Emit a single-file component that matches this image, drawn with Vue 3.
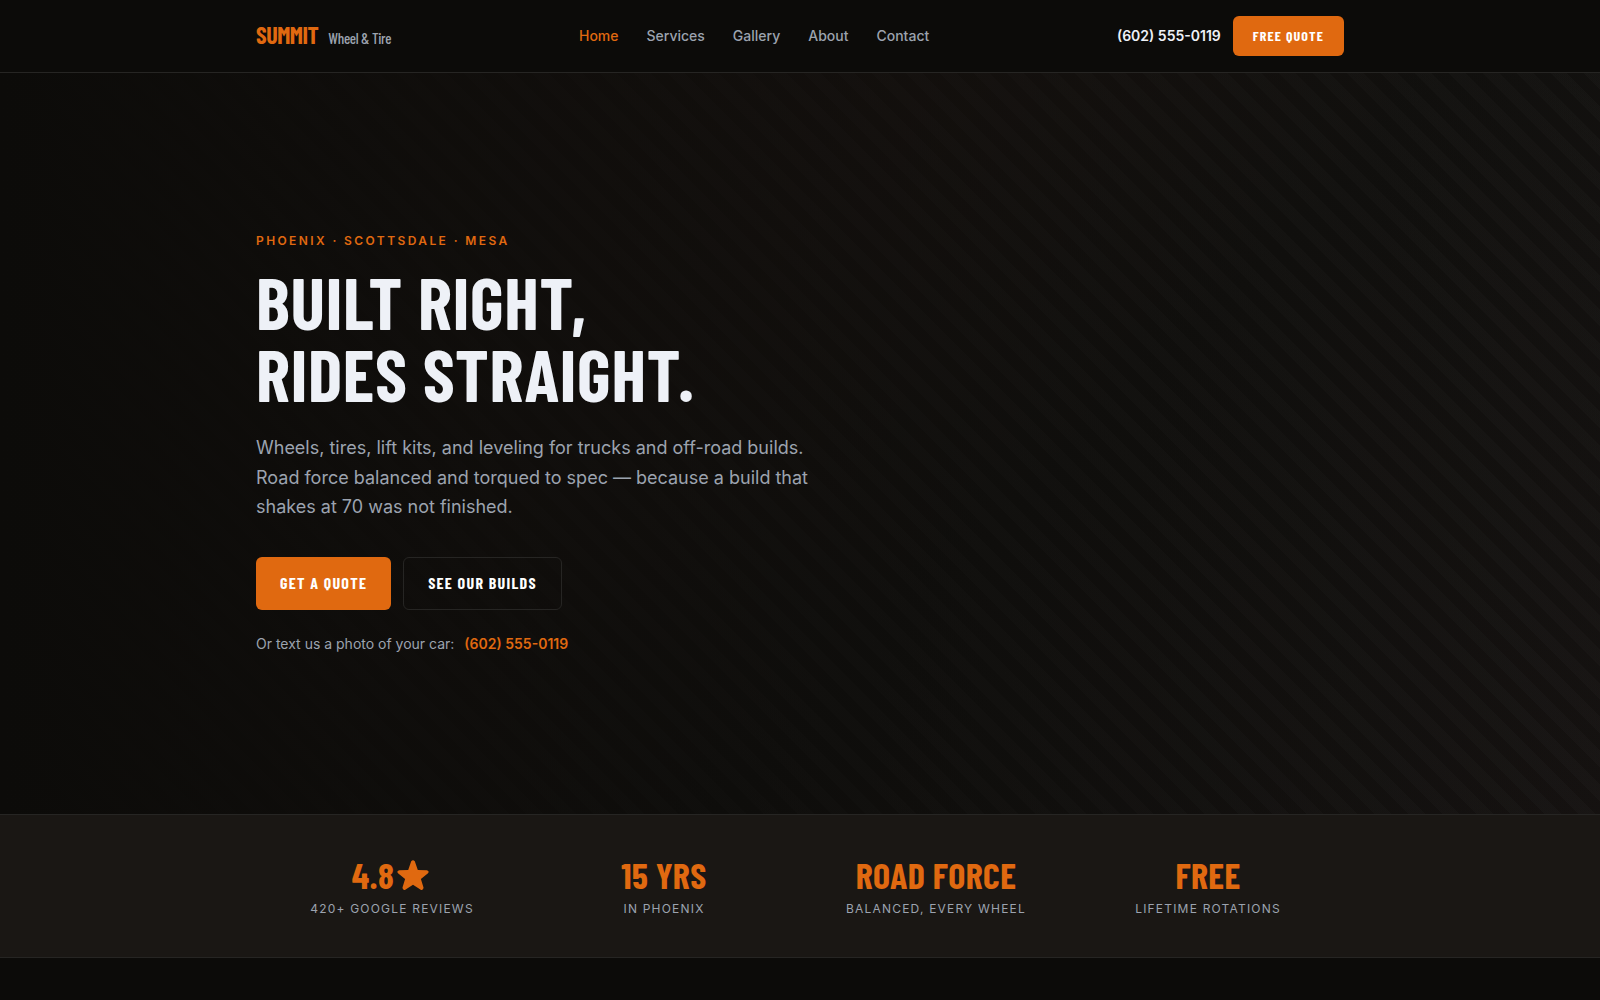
<script setup>
const links = ['Home', 'Services', 'Gallery', 'About', 'Contact']
const stats = [
  { value: '4.8', star: true, label: '420+ Google reviews' },
  { value: '15 yrs', label: 'In Phoenix' },
  { value: 'Road force', label: 'Balanced, every wheel' },
  { value: 'Free', label: 'Lifetime rotations' },
]
</script>

<template>
  <div class="page">
    <header class="header">
      <div class="container bar">
        <a class="brand" href="#">
          <span class="brand-name">SUMMIT</span>
          <span class="brand-sub">Wheel &amp; Tire</span>
        </a>
        <nav class="nav" aria-label="Main">
          <a v-for="(link, i) in links" :key="link" href="#" :class="{ active: i === 0 }">{{ link }}</a>
        </nav>
        <div class="actions">
          <a class="phone" href="tel:6025550119">(602) 555-0119</a>
          <button type="button" class="btn btn-small">Free quote</button>
        </div>
      </div>
    </header>

    <main>
      <section class="hero">
        <div class="container">
          <p class="eyebrow">Phoenix · Scottsdale · Mesa</p>
          <h1>Built right,<br />rides straight.</h1>
          <p class="lead">
            Wheels, tires, lift kits, and leveling for trucks and off-road builds. Road force balanced and torqued to
            spec — because a build that shakes at 70 was not finished.
          </p>
          <div class="cta">
            <button type="button" class="btn">Get a quote</button>
            <button type="button" class="btn btn-outline">See our builds</button>
          </div>
          <p class="text-us">
            <span>Or text us a photo of your car:</span>
            <a href="sms:6025550119">(602) 555-0119</a>
          </p>
        </div>
      </section>

      <section class="stats">
        <dl class="container stats-grid">
          <div v-for="s in stats" :key="s.label" class="stat">
            <dd>
              {{ s.value }}
              <svg v-if="s.star" class="star" viewBox="0 0 32 30" role="img" aria-label="stars">
                <path d="M14.2 1.3Q16 -1 17.8 1.3L20.8 9.9L29.9 10.2Q32.7 11 31 13.2L23.9 18.9L26.5 27.6Q26.6 30.3 24.1 29.9L16 24.8L7.9 29.9Q5.4 30.3 5.5 27.6L8.1 18.9L1 13.2Q-0.7 11 2.1 10.2L11.2 9.9Z" />
              </svg>
            </dd>
            <dt>{{ s.label }}</dt>
          </div>
        </dl>
      </section>
    </main>
  </div>
</template>

<style>
body {
  margin: 0;
  background: #0c0b09;
}
</style>

<style scoped>
.page {
  --bg: #0c0b09;
  --accent: #e06910;
  --muted: #9ca3af;
  --line: #262523;
  --display: 'Barlow Condensed', 'Roboto Condensed', 'Liberation Sans Narrow', 'Liberation Sans', sans-serif;
  min-height: 100vh;
  background: var(--bg);
  color: #eef1f7;
  font-family: Inter, sans-serif;
  font-size: 14px;
  line-height: 1.6;
}
a {
  color: inherit;
  text-decoration: none;
}
.container {
  box-sizing: border-box;
  width: 100%;
  max-width: 1152px;
  margin: 0 auto;
  padding: 0 32px;
}
.header {
  border-bottom: 1px solid var(--line);
}
.bar {
  display: flex;
  align-items: center;
  justify-content: space-between;
  min-height: 72px;
}
.brand {
  display: flex;
  align-items: baseline;
  gap: 10px;
  padding-bottom: 2px;
  font-family: var(--display);
}
.brand-name {
  color: var(--accent);
  font-size: 24px;
  font-weight: 700;
  letter-spacing: -0.02em;
}
.brand-sub {
  color: var(--muted);
  font-size: 15px;
  font-weight: 500;
  letter-spacing: -0.02em;
}
.nav {
  display: flex;
  gap: 28px;
  color: var(--muted);
  font-weight: 500;
}
.nav .active {
  color: var(--accent);
}
.actions {
  display: flex;
  align-items: center;
  gap: 12px;
}
.phone {
  font-weight: 600;
}
.btn {
  height: 53px;
  padding: 0 24px 2px;
  border: 0;
  border-radius: 6px;
  background: var(--accent);
  color: #fff;
  font-family: var(--display);
  font-size: 16px;
  font-weight: 700;
  line-height: 1.6;
  letter-spacing: 0.08em;
  text-transform: uppercase;
}
.btn-small {
  height: 40px;
  padding: 0 20px;
  font-size: 14px;
}
.btn-outline {
  border: 1px solid var(--line);
  background: transparent;
}
.hero {
  display: flex;
  align-items: center;
  box-sizing: border-box;
  min-height: 741px;
  background:
    linear-gradient(90deg, var(--bg) 0%, rgba(12, 11, 9, 0.72) 45%, rgba(12, 11, 9, 0.25) 100%),
    repeating-linear-gradient(45deg, transparent 0 12px, rgba(255, 255, 255, 0.024) 12px 24px),
    linear-gradient(135deg, #241a15 0%, #1d1613 40%, #131210 62%, #181413 100%);
}
.eyebrow {
  margin: 0 0 15px;
  color: var(--accent);
  font-size: 12px;
  font-weight: 600;
  line-height: 18px;
  letter-spacing: 0.2em;
  text-transform: uppercase;
}
h1 {
  margin: 0 0 24px;
  font-family: var(--display);
  font-size: 72px;
  font-weight: 700;
  line-height: 72px;
  letter-spacing: 0.01em;
  text-transform: uppercase;
}
.lead {
  max-width: 576px;
  margin: 0 0 35px;
  color: var(--muted);
  font-size: 18px;
  line-height: 1.65;
}
.cta {
  display: flex;
  gap: 12px;
}
.text-us {
  display: flex;
  gap: 10px;
  margin: 23px 0 0;
  color: var(--muted);
  line-height: 22px;
}
.text-us a {
  color: var(--accent);
  font-weight: 600;
}
.stats {
  padding: 40px 0;
  border: solid var(--line);
  border-width: 1px 0;
  background: #1a1714;
}
.stats-grid {
  display: grid;
  grid-template-columns: repeat(4, 1fr);
}
.stat {
  display: flex;
  flex-direction: column;
  align-items: center;
}
.stat dd {
  display: flex;
  align-items: center;
  gap: 3px;
  margin: 0 0 6px;
  color: var(--accent);
  font-family: var(--display);
  font-size: 36px;
  font-weight: 700;
  line-height: 40px;
  letter-spacing: 0.01em;
  text-transform: uppercase;
}
.star {
  width: 32px;
  height: 30px;
  margin-right: 3px;
  fill: currentColor;
}
.stat dt {
  color: var(--muted);
  font-size: 12px;
  line-height: 16px;
  letter-spacing: 0.1em;
  text-transform: uppercase;
}
</style>
